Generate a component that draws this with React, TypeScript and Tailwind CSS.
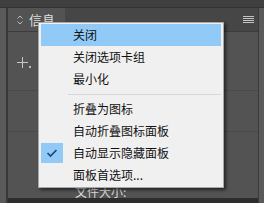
import React from 'react';

const items: { label: string; checked?: boolean; active?: boolean }[] = [
  { label: '关闭', active: true },
  { label: '关闭选项卡组' },
  { label: '最小化' },
];

const items2: { label: string; checked?: boolean; active?: boolean }[] = [
  { label: '折叠为图标' },
  { label: '自动折叠图标面板' },
  { label: '自动显示隐藏面板', checked: true },
  { label: '面板首选项...' },
];

function MenuItem({ label, checked, active }: { label: string; checked?: boolean; active?: boolean }) {
  return (
    <div className={`flex h-[22px] items-center ${active ? 'bg-[#91c9f7]' : ''}`}>
      <div className={`flex h-[20px] w-[22px] items-center justify-center ${checked ? 'bg-[#91c9f7]' : ''}`}>
        {checked && (
          <svg width="12" height="10" viewBox="0 0 12 10" fill="none">
            <path d="M1.5 5 L4.5 8 L10.5 2" stroke="#1f446f" strokeWidth="1.6" />
          </svg>
        )}
      </div>
      <span className="ml-[10px] text-[12px] leading-[12px] text-[#111]">{label}</span>
    </div>
  );
}

export default function App() {
  return (
    <div className="relative flex h-[203px] w-[264px] flex-col overflow-hidden bg-[#535353] font-['Noto_Sans_CJK_SC',sans-serif]">
      <div className="h-[8px] border-b border-[#333] bg-[#3f3f3f]" />
      <div className="flex flex-1">
        <div className="w-[6px] bg-[#5a5a5a]" />
        <div className="w-[2px] bg-[#383838]" />
        <div className="flex flex-1 flex-col">
          <div className="flex h-[24px] border-b border-[#3c3c3c] bg-[#464646]">
            <div className="flex w-[57px] items-center bg-[#535353] pl-[9px]">
              <svg width="6" height="10" viewBox="0 0 6 10" fill="none">
                <path d="M0.5 3.5 L3 1 L5.5 3.5 M0.5 6.5 L3 9 L5.5 6.5" stroke="#bdbdbd" strokeWidth="1" />
              </svg>
              <span className="ml-[6px] text-[13px] leading-[13px] text-[#dedede]">信息</span>
            </div>
            <div className="flex-1" />
            <div className="mr-[4px] flex flex-col justify-center gap-[1px] pb-[1px]">
              <div className="h-[1px] w-[11px] bg-[#c4c4c4]" />
              <div className="h-[1px] w-[11px] bg-[#c4c4c4]" />
              <div className="h-[1px] w-[11px] bg-[#c4c4c4]" />
              <div className="h-[1px] w-[11px] bg-[#c4c4c4]" />
            </div>
          </div>
          <div className="flex flex-1 flex-col">
            <div className="ml-[9px] mt-[25px] flex items-end">
              <svg width="11" height="11" viewBox="0 0 11 11" fill="none">
                <path d="M5.5 0 V11 M0 5.5 H11" stroke="#c8c8c8" strokeWidth="1" />
              </svg>
              <div className="ml-[1px] h-[2px] w-[2px] bg-[#bbb]" />
            </div>
            <div className="mt-[22px] h-[1px] bg-[#4a4a4a]" />
            <div className="mt-[40px] h-[1px] bg-[#4a4a4a]" />
            <div className="mt-auto pl-[67px] text-[12px] leading-[12px] text-[#dcdcdc]">文件大小:</div>
          </div>
          <div className="h-[5px] bg-[#2d2d2d]" />
        </div>
        <div className="w-[1px] bg-[#3a3a3a]" />
        <div className="w-[5px] bg-[#5a5a5a]" />
      </div>

      <div className="absolute left-[38px] top-[22px] w-[186px] border border-[#a9a9a9] bg-[#f0f0f0] px-[2px] py-[1px] shadow-[2px_2px_3px_rgba(0,0,0,0.55)]">
        {items.map((it) => (
          <MenuItem key={it.label} {...it} />
        ))}
        <div className="flex h-[8px] items-center pl-[27px]">
          <div className="h-[1px] w-full bg-[#d7d7d7]" />
        </div>
        {items2.map((it) => (
          <MenuItem key={it.label} {...it} />
        ))}
      </div>
    </div>
  );
}
